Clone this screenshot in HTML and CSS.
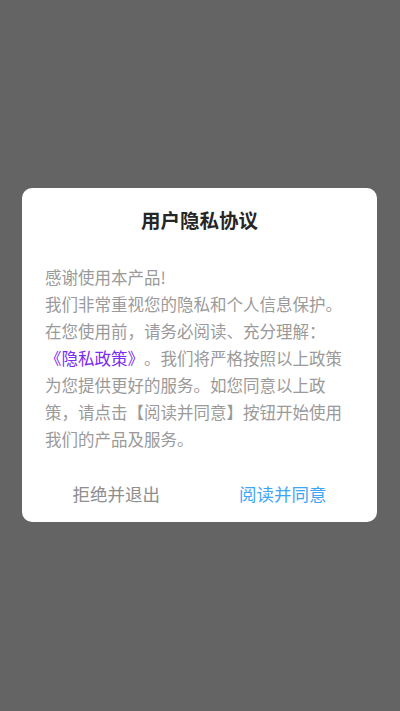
FILE: index.html
```html
<!DOCTYPE html>
<html lang="zh-CN">
<head>
<meta charset="utf-8">
<meta name="viewport" content="width=device-width, initial-scale=1">
<title>用户隐私协议</title>
<link rel="stylesheet" href="styles.css">
</head>
<body>
<div class="overlay">
  <div class="dialog">
    <h1 class="title">用户隐私协议</h1>
    <p class="content">感谢使用本产品!<br>我们非常重视您的隐私和个人信息保护。在您使用前，请务必阅读、充分理解：<span class="link">《隐私政策》</span>。我们将严格按照以上政策为您提供更好的服务。如您同意以上政策，请点击【阅读并同意】按钮开始使用我们的产品及服务。</p>
    <div class="actions">
      <button class="btn btn-reject">拒绝并退出</button>
      <button class="btn btn-agree">阅读并同意</button>
    </div>
  </div>
</div>
</body>
</html>
```

FILE: styles.css
```css
* { box-sizing: border-box; }
html, body {
  margin: 0;
  padding: 0;
  height: 100%;
}
body {
  background: #646464;
  font-family: "Noto Sans CJK SC", "Noto Sans", sans-serif;
  text-spacing-trim: space-all;
}
.overlay {
  height: 711px;
  padding-top: 188px;
  padding-left: 22px;
  padding-right: 23px;
}
.dialog {
  background: #ffffff;
  border-radius: 10px;
  width: 355px;
  height: 334px;
  padding-top: 18px;
  display: flex;
  flex-direction: column;
}
.title {
  margin: 0;
  font-size: 19.5px;
  line-height: 28px;
  font-weight: 700;
  color: #262626;
  text-align: center;
}
.content {
  margin: 30px 0 0;
  padding: 0 23px;
  font-size: 16.5px;
  line-height: 27px;
  color: #9a9a9a;
  text-spacing-trim: space-all;
  line-break: strict;
}
.link {
  color: #7a2cf2;
}
.actions {
  margin-top: auto;
  padding: 0 11px;
  height: 58px;
  display: flex;
}
.btn {
  flex: 1;
  border: none;
  background: transparent;
  font-family: inherit;
  font-size: 17.5px;
  padding: 0;
  cursor: pointer;
}
.btn-reject { color: #8e8e8e; }
.btn-agree { color: #3ea6f5; }
```
